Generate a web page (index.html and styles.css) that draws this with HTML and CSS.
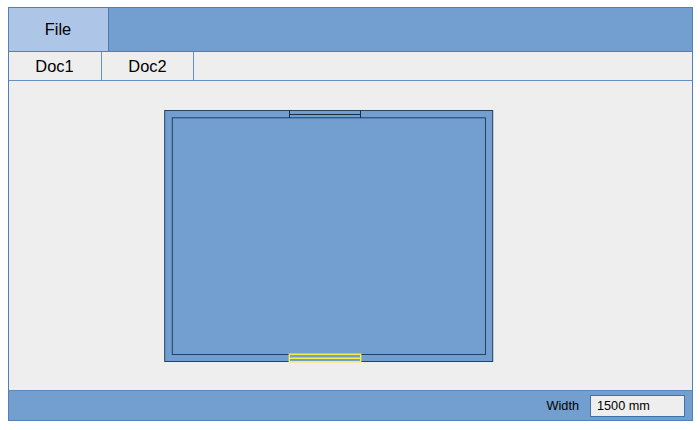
FILE: index.html
```
<!DOCTYPE html>
<html lang="en">
<head>
<meta charset="utf-8">
<title>Plan editor</title>
<link rel="stylesheet" href="styles.css">
</head>
<body>
<div class="window">
  <header class="menubar"><div class="menu">File</div></header>
  <nav class="tabs"><div class="tab">Doc1</div><div class="tab">Doc2</div></nav>
  <main class="canvas">
    <svg class="plan" width="330" height="254" viewBox="164 110 330 254">
      <rect class="wall" x="164.7" y="110.5" width="328" height="251"/>
      <rect class="wall" x="172.3" y="117.8" width="313.2" height="236.7"/>
      <path class="opening" d="M289.5 110.5V118M360.5 110.5V118"/>
      <path class="opening" d="M289.5 114.5H360.5"/>
      <path class="selected" d="M289.3 354.3H360.7V361.7H289.3ZM289.3 358.3H360.7"/>
    </svg>
  </main>
  <footer class="statusbar"><label class="label">Width</label><div class="field">1500 mm</div></footer>
</div>
</body>
</html>
```
FILE: styles.css
```
* { box-sizing: border-box; }
body { margin: 0; background: #fff; font-family: "Liberation Sans", Arial, sans-serif; color: #000; }
.window { width: 685px; height: 414px; margin: 7px 0 0 8px; border: 1px solid #4f80bb; background: #eee; display: flex; flex-direction: column; }
.menubar { height: 44px; background: #729fcf; border-bottom: 1px solid #4f80bb; display: flex; }
.menu { width: 100px; background: #adc5e7; border-right: 1px solid #4a7ab5; display: flex; align-items: center; justify-content: center; font-size: 16.4px; padding-right: 1px; }
.tabs { height: 29px; border-bottom: 1px solid #6590c6; display: flex; }
.tab { width: 92px; border-right: 1px solid #6590c6; display: flex; align-items: center; justify-content: center; font-size: 16.4px; padding-top: 1px; }
.tab:first-child { width: 93px; padding-right: 1px; }
.canvas { flex: 1; padding: 29px 0 0 155px; }
.plan { display: block; }
.wall { fill: #729fcf; stroke: #1d4265; stroke-width: 1; }
.opening { fill: none; stroke: #1a2e42; stroke-width: 1; }
.selected { fill: none; stroke: #f6f04a; stroke-width: 1.4; }
.statusbar { height: 30px; background: #729fcf; border-top: 1px solid #5b8ac2; display: flex; align-items: center; justify-content: flex-end; padding-right: 7px; font-size: 12.7px; }
.label { margin-right: 11px; }
.field { width: 95px; height: 22px; border: 1px solid #3f70b0; background: #eee; padding-left: 6px; line-height: 20px; }
```
